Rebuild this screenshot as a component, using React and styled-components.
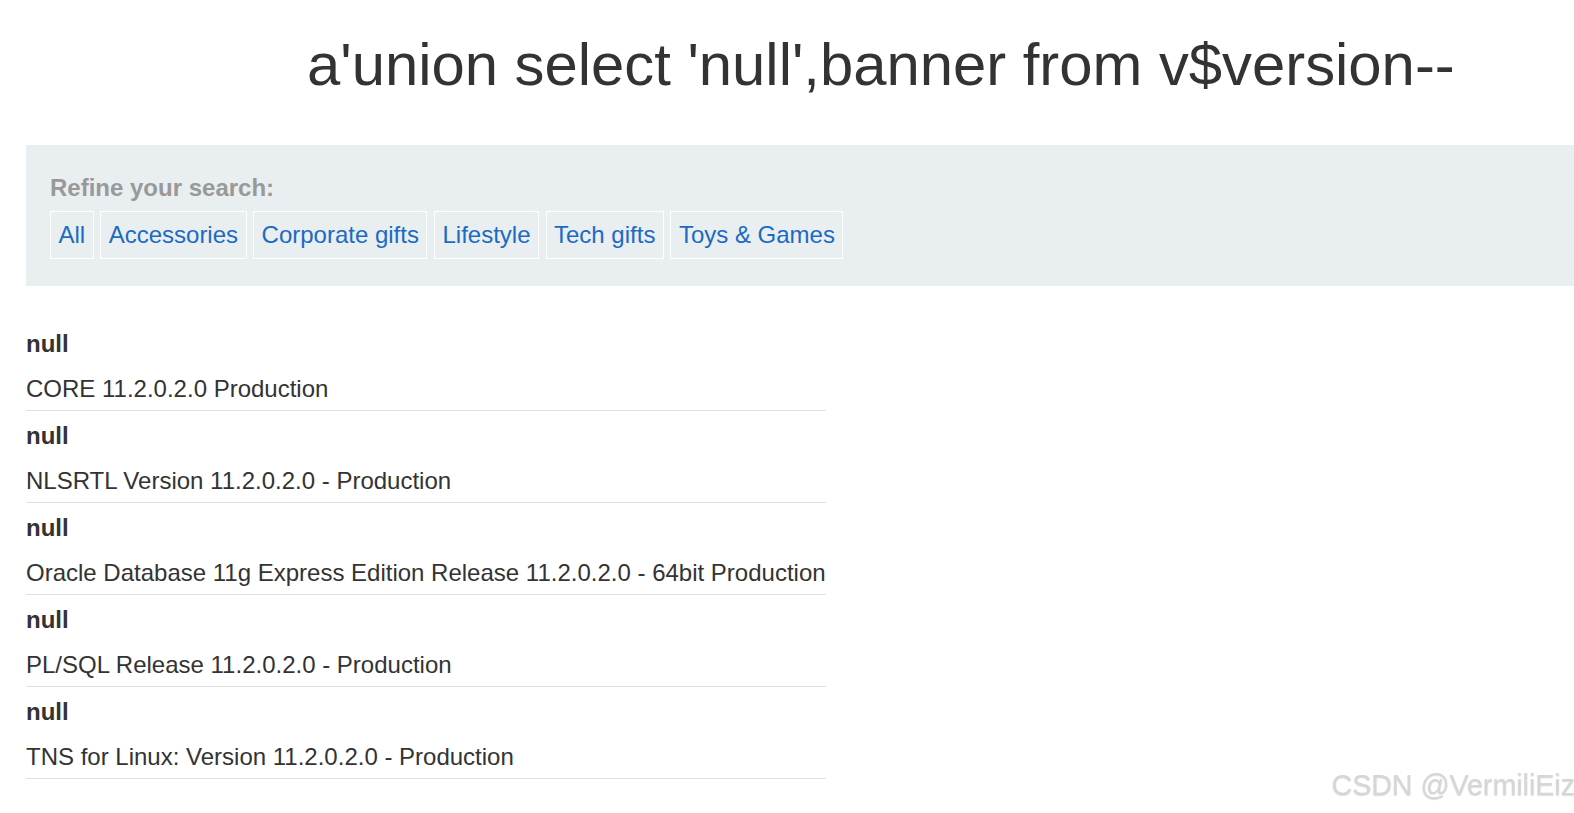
import React from 'react'
import styled, { createGlobalStyle } from 'styled-components'

const GlobalStyle = createGlobalStyle`
  html, body {
    margin: 0;
    padding: 0;
    background: #fff;
  }
  body {
    font-family: "Liberation Sans", Arial, sans-serif;
    color: #333;
  }
`

const Page = styled.div`
  position: relative;
  width: 1574px;
  height: 813px;
  overflow: hidden;
  padding-left: 26px;
  box-sizing: border-box;
`

const Title = styled.h1`
  margin: 30px 0 0;
  padding-left: 281px;
  font-size: 59.8px;
  font-weight: normal;
  line-height: normal;
  color: #333;
  white-space: nowrap;
`

const FilterPanel = styled.section`
  margin-top: 46px;
  background: #e9eef1;
  padding: 26px 24px 28px;
  height: 141px;
  box-sizing: border-box;
`

const FilterLabel = styled.div`
  font-size: 24px;
  font-weight: bold;
  color: #999;
  line-height: 33.6px;
`

const FilterList = styled.div`
  display: flex;
  gap: 6.5px;
  margin-top: 6px;
`

const FilterLink = styled.a`
  display: block;
  border: 1px solid #fff;
  padding: 6px 7.5px;
  font-size: 24px;
  line-height: 34px;
  color: #1c6ac2;
  text-decoration: none;
`

const Results = styled.div`
  margin-top: 33px;
  width: fit-content;
`

const Result = styled.div`
  border-bottom: 1px solid #e0e0e0;
`

const Cell = styled.div`
  height: 45.5px;
  box-sizing: border-box;
  padding-top: 4.6px;
  font-size: 24px;
  line-height: 40.9px;
  font-weight: ${p => (p.$head ? 'bold' : 'normal')};
  color: #333;
  white-space: nowrap;
`

const Watermark = styled.div`
  position: absolute;
  right: -1px;
  bottom: 11px;
  font-size: 28.6px;
  color: #d6d6d6;
  text-shadow: 0 1px 1px rgba(0, 0, 0, 0.14);
`

const categories = ['All', 'Accessories', 'Corporate gifts', 'Lifestyle', 'Tech gifts', 'Toys & Games']

const rows = [
  'CORE 11.2.0.2.0 Production',
  'NLSRTL Version 11.2.0.2.0 - Production',
  'Oracle Database 11g Express Edition Release 11.2.0.2.0 - 64bit Production',
  'PL/SQL Release 11.2.0.2.0 - Production',
  'TNS for Linux: Version 11.2.0.2.0 - Production',
]

export default function App () {
  return (
    <Page>
      <GlobalStyle />
      <Title>a'union select 'null',banner from v$version--</Title>
      <FilterPanel>
        <FilterLabel>Refine your search:</FilterLabel>
        <FilterList>
          {categories.map(c => (
            <FilterLink key={c} href="#">{c}</FilterLink>
          ))}
        </FilterList>
      </FilterPanel>
      <Results>
        {rows.map(r => (
          <Result key={r}>
            <Cell $head>null</Cell>
            <Cell>{r}</Cell>
          </Result>
        ))}
      </Results>
      <Watermark>CSDN @VermiliEiz</Watermark>
    </Page>
  )
}
